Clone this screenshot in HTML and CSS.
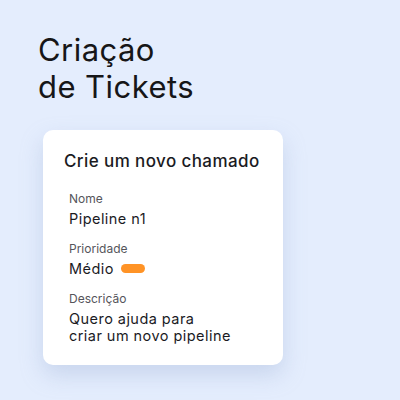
FILE: index.html
```html
<!DOCTYPE html>
<html lang="pt">
<head>
<meta charset="utf-8">
<link rel="stylesheet" href="styles.css">
</head>
<body>
<main class="page">
  <h1 class="heading">Criação<br>de Tickets</h1>
  <section class="card">
    <h2 class="card-title">Crie um novo chamado</h2>
    <div class="fields">
      <div class="field">
        <div class="label">Nome</div>
        <div class="value">Pipeline n1</div>
      </div>
      <div class="field">
        <div class="label">Prioridade</div>
        <div class="value value-row">Médio <span class="badge"></span></div>
      </div>
      <div class="field">
        <div class="label">Descrição</div>
        <div class="value">Quero ajuda para<br>criar um novo pipeline</div>
      </div>
    </div>
  </section>
</main>
</body>
</html>
```
FILE: styles.css
```css
* { box-sizing: border-box; }
html, body { margin: 0; padding: 0; }
body {
  width: 400px;
  height: 400px;
  background: #e4edfd;
  font-family: "Inter", "Open Sans", sans-serif;
  color: #1b1b1f;
  overflow: hidden;
}
.page {
  padding: 31px 0 0 38px;
}
.heading {
  margin: 0;
  font-size: 31px;
  line-height: 37px;
  font-weight: 400;
  letter-spacing: 0.45px;
  color: #161618;
}
.card {
  margin: 25px 0 0 5px;
  width: 240px;
  height: 235px;
  background: #ffffff;
  border-radius: 10px;
  box-shadow: 0 10px 22px rgba(150, 170, 210, 0.35);
  padding: 20px 0 0 21px;
}
.card-title {
  margin: 0;
  font-size: 17px;
  line-height: 22px;
  font-weight: 500;
  letter-spacing: 0.4px;
  color: #1b1b1f;
}
.fields {
  padding: 19px 0 0 5px;
  display: flex;
  flex-direction: column;
  gap: 14px;
}
.label {
  font-size: 12px;
  line-height: 16px;
  margin-bottom: 3px;
  color: #55555b;
}
.value {
  font-size: 14.5px;
  line-height: 17px;
  letter-spacing: 0.45px;
  color: #1b1b1f;
}
.value-row {
  display: flex;
  align-items: center;
  gap: 7px;
}
.badge {
  display: inline-block;
  width: 24px;
  height: 9px;
  border-radius: 5px;
  background: #ff9326;
}
```
